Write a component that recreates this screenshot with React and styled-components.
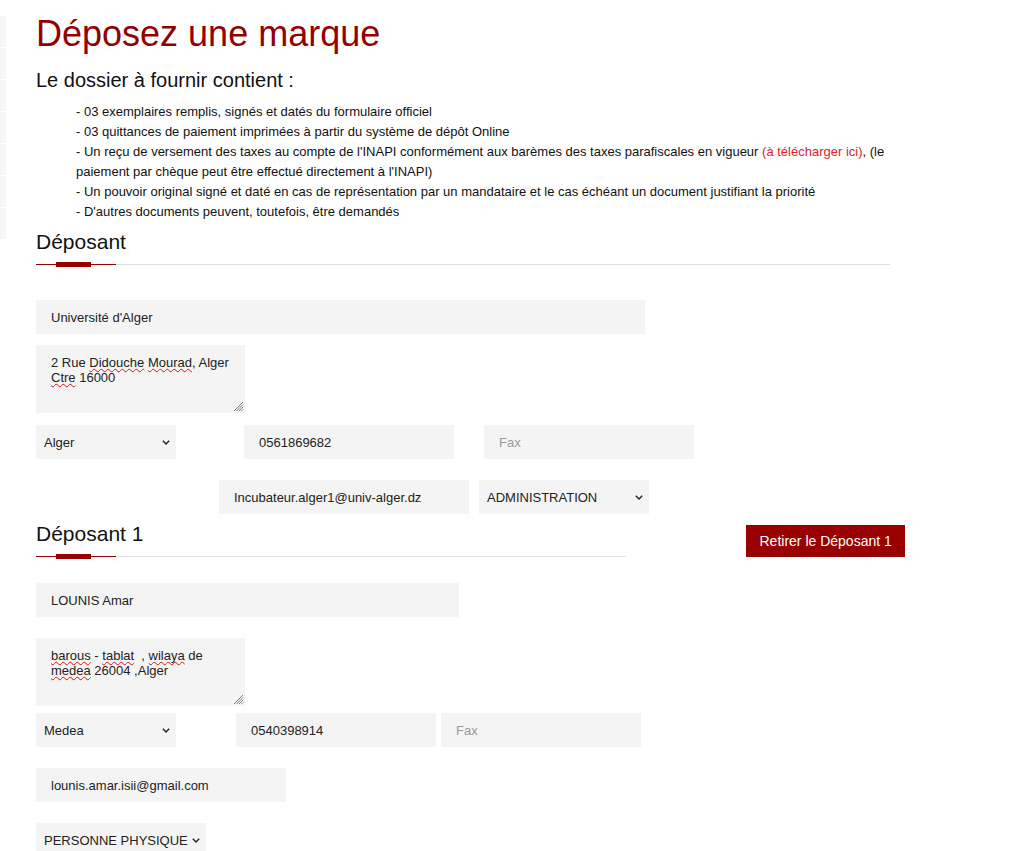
import React from 'react';
import styled, { createGlobalStyle } from 'styled-components';

const GlobalStyle = createGlobalStyle`
  body {
    margin: 0;
    background: #fff;
    font-family: "Liberation Sans", Arial, sans-serif;
    color: #111;
  }
`;

const Grip = () => (
  <GripIcon width="11" height="11" viewBox="0 0 11 11">
    <path d="M10 1 L1 10 M10 3.5 L3.5 10 M10 6 L6 10 M10 8.5 L8.5 10" stroke="#808080" strokeWidth="1" fill="none" />
  </GripIcon>
);

const Chevron = () => (
  <ChevronIcon width="8" height="5" viewBox="0 0 8 5">
    <path d="M0.8 0.8 L4 4 L7.2 0.8" stroke="#222" strokeWidth="1.4" fill="none" />
  </ChevronIcon>
);

const Dropdown = ({ width, ml, value, options }) => (
  <SelectWrap $w={width} $ml={ml}>
    <Select defaultValue={value}>
      {options.map((o) => <option key={o}>{o}</option>)}
    </Select>
    <Chevron />
  </SelectWrap>
);

const SectionHead = ({ title, mt, width }) => (
  <HeadBlock $mt={mt} $w={width}>
    <Heading>{title}</Heading>
    <Rule>
      <RedLine $w={20} />
      <RedBlock />
      <RedLine $w={25} />
      <GreyLine />
    </Rule>
  </HeadBlock>
);

const Address = ({ mt, children }) => (
  <AddressBox $mt={mt}>
    {children}
    <Grip />
  </AddressBox>
);

const Typo = ({ children }) => <Misspelt>{children}</Misspelt>;

const wilayas = ['Alger', 'Medea'];
const kinds = ['ADMINISTRATION', 'PERSONNE PHYSIQUE'];

export default function App() {
  return (
    <>
      <GlobalStyle />
      <Page>
        <SideNav>
          {[0, 1, 2, 3, 4, 5, 6].map((i) => <NavItem key={i} />)}
        </SideNav>
        <Main>
          <Title>Déposez une marque</Title>
          <Subtitle>Le dossier à fournir contient :</Subtitle>
          <Docs>
            <li>- 03 exemplaires remplis, signés et datés du formulaire officiel</li>
            <li>- 03 quittances de paiement imprimées à partir du système de dépôt Online</li>
            <li>
              - Un reçu de versement des taxes au compte de l'INAPI conformément aux barèmes des taxes parafiscales en vigueur
              {' '}
              <DocLink href="#">(à télécharger ici)</DocLink>
              , (le paiement par chèque peut être effectué directement à l'INAPI)
            </li>
            <li>- Un pouvoir original signé et daté en cas de représentation par un mandataire et le cas échéant un document justifiant la priorité</li>
            <li>- D'autres documents peuvent, toutefois, être demandés</li>
          </Docs>

          <SectionHead title="Déposant" mt={8} />
          <Field $w={609} $mt={33} defaultValue="Université d'Alger" />
          <Address mt={11}>
            2 Rue <Typo>Didouche</Typo> <Typo>Mourad</Typo>, Alger <Typo>Ctre</Typo> 16000
          </Address>
          <Row $mt={12}>
            <Dropdown width={140} value="Alger" options={wilayas} />
            <Field $w={210} $ml={68} defaultValue="0561869682" />
            <Field $w={210} $ml={30} placeholder="Fax" />
          </Row>
          <Row $mt={21} $pl={183}>
            <Field $w={250} defaultValue="Incubateur.alger1@univ-alger.dz" />
            <Dropdown width={170} ml={10} value="ADMINISTRATION" options={kinds} />
          </Row>

          <HeadRow>
            <SectionHead title="Déposant 1" mt={8} width={590} />
            <RemoveButton type="button">Retirer le Déposant 1</RemoveButton>
          </HeadRow>
          <Field $w={423} $mt={24} defaultValue="LOUNIS Amar" />
          <Address mt={21}>
            <Typo>barous</Typo> - <Typo>tablat</Typo>  , <Typo>wilaya</Typo> de <Typo>medea</Typo> 26004 ,Alger
          </Address>
          <Row $mt={7}>
            <Dropdown width={140} value="Medea" options={wilayas} />
            <Field $w={200} $ml={60} defaultValue="0540398914" />
            <Field $w={200} $ml={5} placeholder="Fax" />
          </Row>
          <Field $w={250} $mt={21} defaultValue="lounis.amar.isii@gmail.com" />
          <Row $mt={21}>
            <Dropdown width={170} value="PERSONNE PHYSIQUE" options={kinds} />
          </Row>
        </Main>
      </Page>
    </>
  );
}

const Page = styled.div`
  display: flex;
  align-items: flex-start;
`;

const SideNav = styled.nav`
  width: 6px;
  margin-top: 16px;
  display: flex;
  flex-direction: column;
  gap: 1px;
`;

const NavItem = styled.div`
  height: 31px;
  background: #f6f6f6;
`;

const Main = styled.main`
  width: 854px;
  padding: 13px 0 40px 30px;
  display: flex;
  flex-direction: column;
  align-items: flex-start;
`;

const Title = styled.h1`
  margin: 0;
  font-size: 36px;
  line-height: 41px;
  font-weight: 400;
  color: #930000;
`;

const Subtitle = styled.h2`
  margin: 15px 0 0;
  font-size: 20px;
  line-height: 23px;
  font-weight: 400;
  color: #111;
`;

const Docs = styled.ul`
  list-style: none;
  margin: 10px 0 0;
  padding: 0 0 0 40px;
  font-size: 13px;
  line-height: 20px;
  color: #111;
`;

const DocLink = styled.a`
  color: #e3212b;
  text-decoration: none;
`;

const HeadBlock = styled.div`
  flex-shrink: 0;
  margin-top: ${(p) => p.$mt}px;
  width: ${(p) => (p.$w ? `${p.$w}px` : '100%')};
`;

const Heading = styled.h3`
  margin: 0;
  font-size: 21px;
  line-height: 24px;
  font-weight: 400;
  color: #111;
`;

const Rule = styled.div`
  margin-top: 8px;
  height: 5px;
  display: flex;
  align-items: center;
`;

const RedLine = styled.span`
  flex: 0 0 ${(p) => p.$w}px;
  height: 1px;
  background: #990000;
`;

const RedBlock = styled.span`
  flex: 0 0 35px;
  height: 5px;
  background: #990000;
`;

const GreyLine = styled.span`
  flex: 1;
  height: 1px;
  background: #dedede;
`;

const HeadRow = styled.div`
  display: flex;
  align-items: flex-start;
  gap: 120px;
`;

const RemoveButton = styled.button`
  flex-shrink: 0;
  margin-top: 11px;
  height: 32px;
  padding: 0 13.5px;
  border: none;
  background: #990000;
  color: #fff;
  font-family: "Liberation Sans", Arial, sans-serif;
  font-size: 14px;
  white-space: nowrap;
  cursor: pointer;
`;

const Row = styled.div`
  display: flex;
  align-items: center;
  margin-top: ${(p) => p.$mt || 0}px;
  padding-left: ${(p) => p.$pl || 0}px;
`;

const Field = styled.input`
  box-sizing: border-box;
  width: ${(p) => p.$w}px;
  height: 34px;
  margin-top: ${(p) => p.$mt || 0}px;
  margin-left: ${(p) => p.$ml || 0}px;
  padding: 0 15px;
  border: none;
  outline: none;
  background: #f4f4f4;
  font-family: "Liberation Sans", Arial, sans-serif;
  font-size: 13px;
  color: #222;
  &::placeholder {
    color: #9a9a9a;
  }
`;

const SelectWrap = styled.div`
  position: relative;
  flex-shrink: 0;
  width: ${(p) => p.$w}px;
  height: 34px;
  margin-left: ${(p) => p.$ml || 0}px;
`;

const Select = styled.select`
  appearance: none;
  box-sizing: border-box;
  width: 100%;
  height: 100%;
  padding: 0 18px 0 8px;
  border: none;
  border-radius: 0;
  outline: none;
  background: #f4f4f4;
  font-family: "Liberation Sans", Arial, sans-serif;
  font-size: 13px;
  color: #222;
`;

const ChevronIcon = styled.svg`
  position: absolute;
  right: 6px;
  top: 15px;
  pointer-events: none;
`;

const AddressBox = styled.div`
  position: relative;
  box-sizing: border-box;
  width: 209px;
  height: 68px;
  margin-top: ${(p) => p.$mt}px;
  padding: 10px 10px 10px 15px;
  background: #f4f4f4;
  font-size: 13px;
  line-height: 15px;
  color: #222;
  white-space: pre-wrap;
`;

const Misspelt = styled.span`
  text-decoration: underline wavy #e01010;
  text-decoration-thickness: 1px;
  text-underline-offset: 1px;
  text-decoration-skip-ink: none;
`;

const GripIcon = styled.svg`
  position: absolute;
  right: 1px;
  bottom: 1px;
`;
